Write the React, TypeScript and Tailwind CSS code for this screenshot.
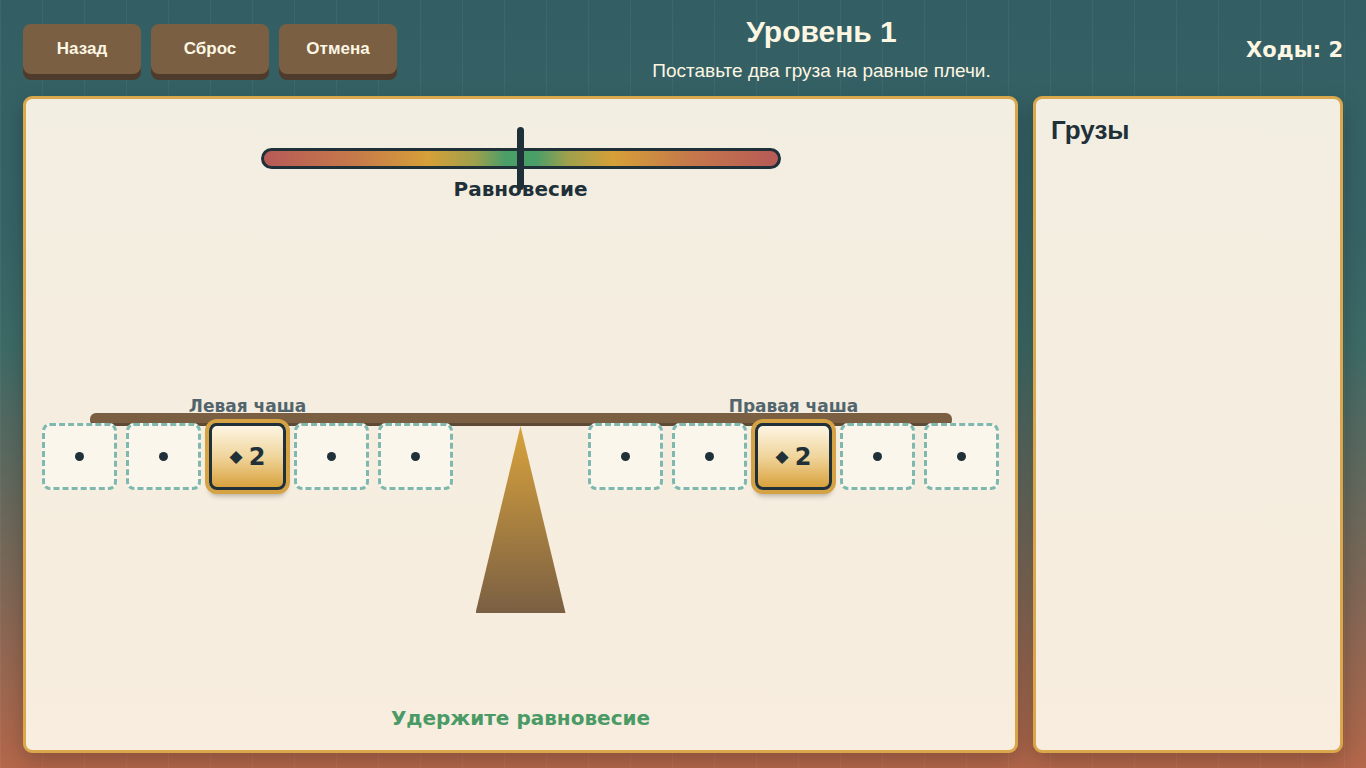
import React from "react";

const heavy = "font-['DejaVu_Sans',Verdana,sans-serif] font-bold";
const sans = "font-['Liberation_Sans',Arial,sans-serif]";

function EmptySlot() {
  return (
    <div className="w-[75px] h-[67px] rounded-[8px] border-[3px] border-dashed border-[#7fb8ae] bg-[#faf6ec] flex items-center justify-center">
      <div className="w-[9px] h-[9px] rounded-full bg-[#1f3038]" />
    </div>
  );
}

function WeightSlot({ value }: { value: number }) {
  return (
    <div className="w-[77px] h-[67px] -mx-[1px] rounded-[8px] border-[3px] border-[#1f3038] bg-[linear-gradient(180deg,#fdf5e3_0%,#f0d59c_50%,#d9a23e_100%)] shadow-[0_0_0_4px_#d6a344,0_6px_5px_rgba(70,60,50,0.35)] flex items-center justify-center gap-[6px] text-[#1f3038]">
      <span className={`${heavy} text-[17px] leading-none`}>◆</span>
      <span className={`${heavy} text-[24px] leading-none`}>{value}</span>
    </div>
  );
}

function Pan({ slots }: { slots: number[] }) {
  return (
    <div className="flex gap-[9px]">
      {slots.map((v, i) => (v ? <WeightSlot key={i} value={v} /> : <EmptySlot key={i} />))}
    </div>
  );
}

export default function App() {
  const left = [0, 0, 2, 0, 0];
  const right = [0, 0, 2, 0, 0];

  return (
    <div
      className={`${sans} relative w-screen h-screen overflow-hidden flex flex-col px-[23px] pt-[14px] pb-[15px] bg-[linear-gradient(180deg,#335f64_0%,#376366_30%,#3d6a66_45%,#826755_78%,#b4674a_100%)]`}
    >
      {/* faint vertical rulings */}
      <div className="pointer-events-none absolute inset-0 bg-[linear-gradient(90deg,rgba(255,255,255,0.045)_1px,transparent_1px)] bg-[size:42px_100%]" />

      {/* header */}
      <header className="relative h-[82px] flex items-start">
        <div className="flex gap-[10px] mt-[10px]">
          {["Назад", "Сброс", "Отмена"].map((t) => (
            <button
              key={t}
              className="w-[118px] h-[50px] rounded-[8px] bg-[#7a5f42] shadow-[0_6px_0_#4e3b2b] text-[#fdf6e3] text-[17px] font-bold"
            >
              {t}
            </button>
          ))}
        </div>
        <div className="flex-1 flex flex-col items-center">
          <h1 className="text-[30px] leading-[36px] font-bold text-[#fdf6e3]">Уровень 1</h1>
          <p className="mt-[9px] text-[19px] leading-[24px] text-[#fdf6e3]">Поставьте два груза на равные плечи.</p>
        </div>
        <div className={`${heavy} mt-[23px] text-[21px] leading-[26px] text-[#fdf6e3]`}>Ходы: 2</div>
      </header>

      {/* playfield */}
      <main className="relative flex-1 flex gap-[15px] min-h-0">
        <section className="flex-1 flex flex-col items-center rounded-[9px] border-[3px] border-[#daa74a] bg-[linear-gradient(180deg,#f2eee1_0%,#f8edde_100%)] shadow-[0_8px_22px_rgba(0,0,0,0.22)]">
          {/* balance gauge */}
          <div className="relative mt-[28px] w-[520px] pt-[21px] flex flex-col items-center">
            <div className="w-full h-[21px] rounded-full border-[3px] border-[#1f3038] bg-[linear-gradient(90deg,#b75a57_0%,#c67a4a_18%,#d6a038_32%,#9ea04c_41%,#4a9e68_47%,#4a9e68_53%,#9ea04c_59%,#d6a038_68%,#c67a4a_82%,#b75a57_100%)]" />
            <div className={`${heavy} mt-[8px] text-[20px] leading-[24px] text-[#1f3038]`}>Равновесие</div>
            <div className="absolute left-[256px] top-0 w-[7px] h-[63px] rounded-full bg-[#1f3038]" />
          </div>

          {/* scale */}
          <div className="mt-[195px] flex flex-col items-center">
            <div className="flex gap-[135px] mb-[-3px]">
              <div className={`${heavy} w-[411px] text-center text-[17px] leading-[20px] text-[#52656d]`}>Левая чаша</div>
              <div className={`${heavy} w-[411px] text-center text-[17px] leading-[20px] text-[#52656d]`}>Правая чаша</div>
            </div>
            <div className="w-[862px] h-[13px] rounded-[6px] bg-[#7a5f43] border-b-[3px] border-[#5e4934]" />
            <div className="-mt-[3px] flex items-start">
              <Pan slots={left} />
              <div className="w-[135px] flex justify-center pt-[3px]">
                <div className="w-[90px] h-[187px] [clip-path:polygon(50%_0,100%_100%,0_100%)] bg-[linear-gradient(180deg,#d9a33c_0%,#7a5f43_100%)]" />
              </div>
              <Pan slots={right} />
            </div>
          </div>

          <div className={`${heavy} mt-auto mb-[20px] text-[20px] leading-[24px] text-[#4a9a66]`}>Удержите равновесие</div>
        </section>

        <aside className="w-[310px] rounded-[9px] border-[3px] border-[#daa74a] bg-[linear-gradient(180deg,#f2eee1_0%,#f8edde_100%)] shadow-[0_8px_22px_rgba(0,0,0,0.22)] pt-[16px] px-[15px]">
          <h2 className="text-[26px] leading-[30px] font-bold text-[#1f3038]">Грузы</h2>
        </aside>
      </main>
    </div>
  );
}
